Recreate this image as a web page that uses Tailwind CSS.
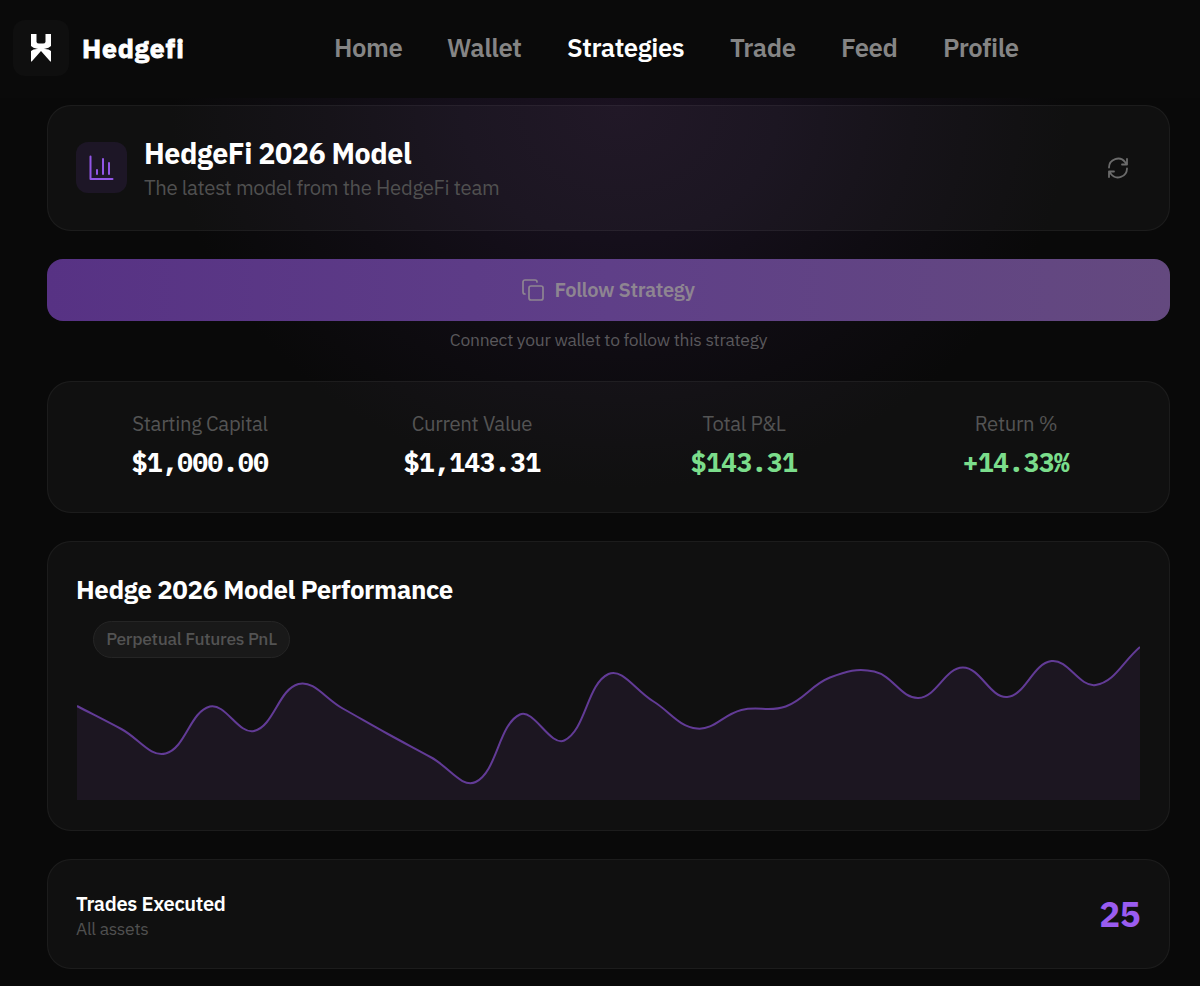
<!DOCTYPE html>
<html lang="en">
<head>
  <meta charset="UTF-8" />
  <meta name="viewport" content="width=device-width, initial-scale=1.0" />
  <title>Strategies | Hedgefi</title>
  <script src="https://cdn.jsdelivr.net/npm/@tailwindcss/browser@4"></script>
</head>
<body class="bg-[#090909] text-white font-['IBM_Plex_Sans','Open_Sans',sans-serif] h-[986px] overflow-hidden">
  <header class="flex items-center h-[98px] pb-[2px] pl-[13px] bg-[#0a0a0a] whitespace-nowrap">
    <div class="flex items-center justify-center w-14 h-14 rounded-xl bg-[#0f0f0f]">
      <svg class="w-5 h-7" viewBox="0 0 20 28" fill="#fff"><path d="M0 0H5.500V8Q6 9.500 8 9.500H12Q14 9.500 14.500 8V0H20V12Q18 14.300 14 14.700L10 15.500 6 14.700Q2 14.300 0 12Z" /><path d="M0 17Q2 15 6 15H14Q18 15 20 17V27.500H19.300L10 17 .7 27.500H0Z" /></svg>
    </div>
    <div class="ml-[13px] pt-[2px] w-[252px] text-[26.500px] font-bold tracking-[0.8px] [-webkit-text-stroke:0.8px_#fff]">Hedgefi</div>
    <nav class="flex gap-[45px] text-[25.700px] font-semibold text-[#858585] tracking-[-0.016em]">
      <a class="w-[68px]">Home</a>
      <a class="w-[75px]">Wallet</a>
      <a class="w-[118px] text-white">Strategies</a>
      <a class="w-[66px]">Trade</a>
      <a class="w-[57px]">Feed</a>
      <a class="w-[75px]">Profile</a>
    </nav>
  </header>

  <main class="h-[888px] pt-[7px] pl-[47px] pr-[30px] whitespace-nowrap bg-[radial-gradient(ellipse_450px_380px_at_620px_10px,#1a1120_0%,#150f1b_35%,#0f0c12_65%,#090909_100%)]">
    <section class="flex items-center h-[126px] px-[28px] pb-px rounded-3xl border border-white/5 bg-white/3">
      <div class="flex items-center justify-center w-[51px] h-[51px] rounded-xl bg-[#1d1626]">
        <svg class="w-[26px] h-[26px]" viewBox="0 0 26 26" fill="none" stroke="#9256e6" stroke-width="2" stroke-linecap="round" stroke-linejoin="round"><path d="M1.500 1.500v22.500h22M8 19v-4M14 19V4M20 19V8" /></svg>
      </div>
      <div class="ml-[17px] pt-[3px]">
        <h1 class="text-[28.700px] leading-[36px] font-bold tracking-[-0.016em]">HedgeFi 2026 Model</h1>
        <p class="text-[20.350px] leading-[31px] text-[#505050] tracking-[-0.016em]">The latest model from the HedgeFi team</p>
      </div>
      <svg class="ml-auto mr-[12px] w-[22px] h-[22px]" viewBox="0 0 22 22" fill="none" stroke="#6b6b6b" stroke-width="1.800" stroke-linecap="round" stroke-linejoin="round"><path d="M2 10.500a9 9 0 0 1 16.200-5.300L20 7.500M20 2v5.500h-5M20 11.500a9 9 0 0 1-16.200 5.300L2 14.500M2 20v-5.500h5" /></svg>
    </section>

    <button class="flex items-center justify-center w-full h-[62px] mt-[28px] rounded-2xl bg-linear-to-r from-[#573284] via-[#5f3f88] to-[#64497f] text-[20.100px] font-semibold text-[#8e8591] tracking-[-0.016em]">
      <svg class="w-[22px] h-[22px] mr-[11px]" viewBox="0 0 22 22" fill="none" stroke="currentColor" stroke-width="1.700" stroke-linecap="round" stroke-linejoin="round"><rect x="7" y="7" width="14" height="14" rx="2" /><path d="M3 15a2 2 0 0 1-2-2V3a2 2 0 0 1 2-2h10a2 2 0 0 1 2 2" /></svg>
      <span class="w-[141px] text-left">Follow Strategy</span>
    </button>
    <p class="h-[60px] pt-[6px] text-center text-[17.500px] leading-[26px] text-[#5a585c] tracking-[-0.016em]">Connect your wallet to follow this strategy</p>

    <section class="grid grid-cols-4 h-[132px] pl-[16px] pr-[17px] pt-[25px] rounded-3xl border border-white/5 bg-white/3 text-center">
      <div>
        <p class="text-[20.350px] leading-[33px] text-[#545454] tracking-[-0.016em]">Starting Capital</p>
        <p class="mt-[4px] text-[26px] leading-[36px] font-bold font-['IBM_Plex_Mono','Liberation_Mono',monospace] tracking-[-0.016em]">$1,000.00</p>
      </div>
      <div>
        <p class="text-[20.350px] leading-[33px] text-[#545454] tracking-[-0.016em]">Current Value</p>
        <p class="mt-[4px] text-[26px] leading-[36px] font-bold font-['IBM_Plex_Mono','Liberation_Mono',monospace] tracking-[-0.016em]">$1,143.31</p>
      </div>
      <div>
        <p class="text-[20.350px] leading-[33px] text-[#545454] tracking-[-0.016em]">Total P&amp;L</p>
        <p class="mt-[4px] text-[26px] leading-[36px] font-bold font-['IBM_Plex_Mono','Liberation_Mono',monospace] tracking-[-0.016em] text-[#7bdd8b]">$143.31</p>
      </div>
      <div>
        <p class="text-[20.350px] leading-[33px] text-[#545454] tracking-[-0.016em]">Return %</p>
        <p class="mt-[4px] text-[26px] leading-[36px] font-bold font-['IBM_Plex_Mono','Liberation_Mono',monospace] tracking-[-0.016em] text-[#7bdd8b]">+14.33%</p>
      </div>
    </section>

    <section class="h-[290px] mt-[28px] px-[29px] pt-[30px] rounded-3xl border border-white/5 bg-white/3">
      <h2 class="-ml-px text-[25.850px] leading-[36px] font-bold tracking-[-0.016em]">Hedge 2026 Model Performance</h2>
      <div class="relative mt-[13px]">
        <span class="absolute left-[16px] top-0 flex items-center justify-center w-[197px] h-[37px] rounded-full border border-[#252525] bg-[#191919] text-[17.400px] font-medium text-[#535353] tracking-[-0.016em]">Perpetual Futures PnL</span>
        <svg class="w-[1063px] h-[179px]" viewBox="77 621 1063 179" fill="none">
          <path id="area" fill="#1c1621" />
          <path id="line" stroke="#623b96" stroke-width="2" />
        </svg>
      </div>
    </section>

    <section class="flex items-center justify-between h-[110px] mt-[28px] pt-px px-[29px] rounded-3xl border border-white/5 bg-white/3">
      <div class="-ml-px pt-px">
        <h3 class="text-[20.100px] leading-[27px] font-semibold tracking-[-0.016em]">Trades Executed</h3>
        <p class="text-[17.500px] leading-[24px] text-[#505050] tracking-[-0.016em]">All assets</p>
      </div>
      <div class="text-[34.800px] font-bold text-[#9a5cf0] tracking-[-0.016em]">25</div>
    </section>
  </main>

  <script>
    const values = [706, 729, 753.5, 706.5, 731, 684, 708.5, 733.5, 757.5, 782, 714.5, 740.5, 674, 701, 728.5, 710, 706.5, 677.5, 671.5, 698, 667.5, 697, 661, 685, 647];
    const pts = values.map((y, i) => [77 + i * 1063 / 24, y]);
    const tension = 0.4;

    // control points either side of each point, same as a tension spline
    const ctrl = pts.map((p, i) => {
      const a = pts[i - 1] || p;
      const b = pts[i + 1] || p;
      const d0 = Math.hypot(p[0] - a[0], p[1] - a[1]);
      const d1 = Math.hypot(b[0] - p[0], b[1] - p[1]);
      const f0 = tension * d0 / (d0 + d1);
      const f1 = tension * d1 / (d0 + d1);
      return [
        p[0] - f0 * (b[0] - a[0]), p[1] - f0 * (b[1] - a[1]),
        p[0] + f1 * (b[0] - a[0]), p[1] + f1 * (b[1] - a[1]),
      ];
    });

    let d = `M${pts[0]}`;
    for (let i = 1; i < pts.length; i++) {
      d += `C${ctrl[i - 1][2]},${ctrl[i - 1][3]} ${ctrl[i][0]},${ctrl[i][1]} ${pts[i]}`;
    }
    document.getElementById('line').setAttribute('d', d);
    document.getElementById('area').setAttribute('d', d + 'V800H77Z');
  </script>
</body>
</html>
